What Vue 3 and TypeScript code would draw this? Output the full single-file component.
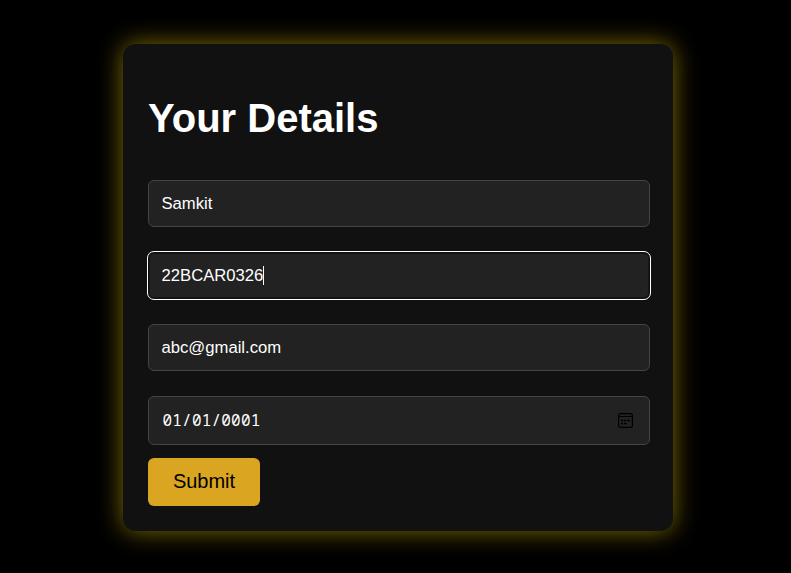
<script setup lang="ts">
interface Field {
  id: string
  value: string
  kind?: 'focused' | 'date'
}

const fields: Field[] = [
  { id: 'name', value: 'Samkit' },
  { id: 'roll', value: '22BCAR0326', kind: 'focused' },
  { id: 'email', value: 'abc@gmail.com' },
  { id: 'date', value: '01/01/0001', kind: 'date' },
]
</script>

<template>
  <main class="page">
    <form class="card" @submit.prevent>
      <h1 class="title">Your Details</h1>
      <div class="fields">
        <div v-for="field in fields" :key="field.id" class="field" :class="field.kind">
          <span class="value">{{ field.value }}</span>
          <span v-if="field.kind === 'focused'" class="caret"></span>
          <svg v-if="field.kind === 'date'" class="calendar" width="15" height="15" viewBox="0 0 15 15">
            <rect x="0.6" y="0.6" width="13.8" height="13.8" rx="2" fill="none" stroke="#000" stroke-width="1.2" />
            <path d="M0.5 3.5h14" stroke="#000" />
            <path d="M3 7.5h2M6 7.5h2M9 7.5h3M3 10.5h2M6 10.5h2.5" stroke="#000" stroke-width="1.5" />
          </svg>
        </div>
      </div>
      <button class="submit" type="submit">Submit</button>
    </form>
  </main>
</template>

<style>
body {
  background: #000;
}
</style>

<style scoped>
.page {
  height: 573px;
  box-sizing: border-box;
  padding: 44px 118px 0 123px;
  overflow: hidden;
  background: #000;
  font-family: "Liberation Sans", Arial, sans-serif;
  color: #fff;
}

.card {
  box-sizing: border-box;
  width: 550px;
  height: 487px;
  padding: 50px 23px 25px 25px;
  border-radius: 12.5px;
  background: #111;
  box-shadow: 0 0 25px rgba(255, 215, 0, 0.5);
}

.title {
  margin: 0 0 38px;
  font-size: 40px;
  line-height: 48px;
  font-weight: 700;
}

.fields {
  display: flex;
  flex-direction: column;
  gap: 25px;
}

.field {
  box-sizing: border-box;
  display: flex;
  align-items: center;
  height: 47px;
  padding: 0 16px 0 12.5px;
  border: 1px solid #444;
  border-radius: 6px;
  background: #222;
  font-size: 16.67px;
  line-height: 20px;
}

.focused {
  border-color: #101010;
  outline: 1px solid #fff;
  box-shadow: inset 0 0 0 1px #161616;
}

.caret {
  width: 1px;
  height: 19px;
  background: #fff;
}

.date {
  height: 49px;
  justify-content: space-between;
  padding-left: 13.5px;
  font-family: Consolas, "Noto Sans Mono", "Noto Sans Mono CJK JP", "Liberation Mono", monospace;
  font-size: 16px;
  letter-spacing: 0.2px;
}

.date .value {
  padding-bottom: 2px;
}

.submit {
  display: block;
  width: 112px;
  height: 48px;
  margin-top: 13px;
  padding: 0 0 2px;
  border: 0;
  border-radius: 6px;
  background: #daa520;
  color: #000;
  font-family: inherit;
  font-size: 20px;
}
</style>
